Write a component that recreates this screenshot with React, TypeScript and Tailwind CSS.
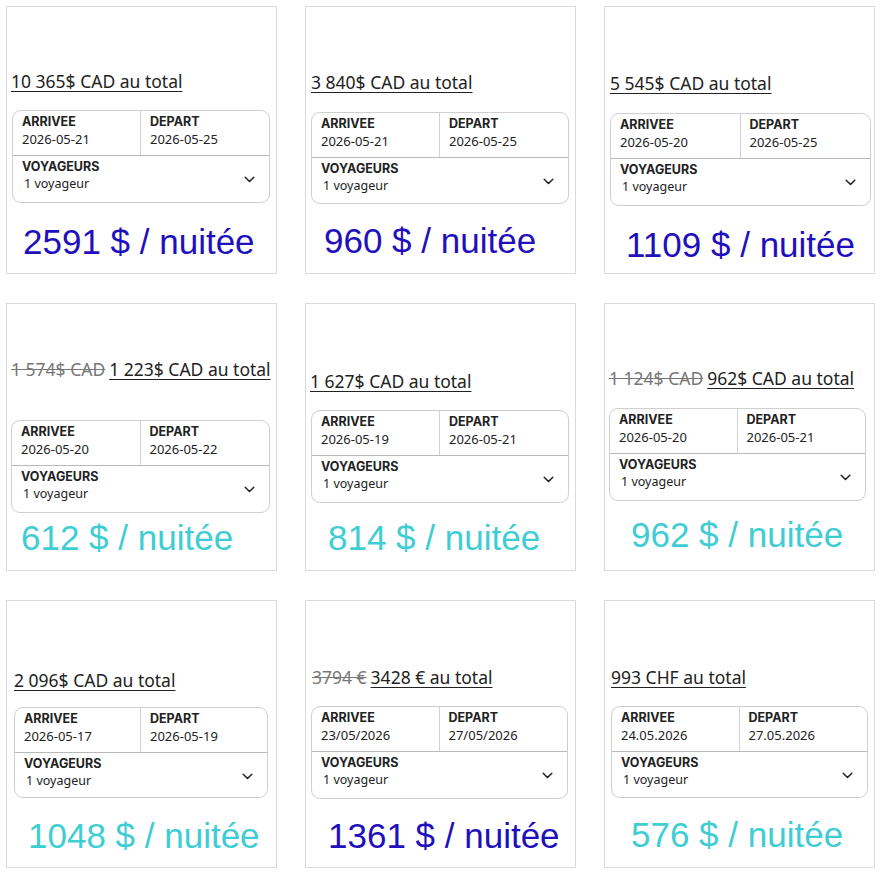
import React from 'react';

type Offer = {
  was?: string;
  total: string;
  arrive: string;
  depart: string;
  nightly: string;
  tone: 'blue' | 'cyan';
  // spacing inside each card, written out so Tailwind picks them up
  titleCls: string;
  boxCls: string;
  priceCls: string;
};

const offers: Offer[] = [
  { total: '10 365$ CAD au total', arrive: '2026-05-21', depart: '2026-05-25', nightly: '2591 $ / nuitée', tone: 'blue',
    titleCls: 'mt-[64px] ml-[4px]', boxCls: 'mt-[19px] ml-[5px] w-[258px] h-[93px]', priceCls: 'mt-[19px] ml-[16px]' },
  { total: '3 840$ CAD au total', arrive: '2026-05-21', depart: '2026-05-25', nightly: '960 $ / nuitée', tone: 'blue',
    titleCls: 'mt-[65px] ml-[5px]', boxCls: 'mt-[20px] ml-[5px] w-[258px] h-[92px]', priceCls: 'mt-[17px] ml-[18px]' },
  { total: '5 545$ CAD au total', arrive: '2026-05-20', depart: '2026-05-25', nightly: '1109 $ / nuitée', tone: 'blue',
    titleCls: 'mt-[66px] ml-[5px]', boxCls: 'mt-[20px] ml-[5px] w-[261px] h-[93px]', priceCls: 'mt-[19px] ml-[21px]' },
  { was: '1 574$ CAD', total: '1 223$ CAD au total', arrive: '2026-05-20', depart: '2026-05-22', nightly: '612 $ / nuitée', tone: 'cyan',
    titleCls: 'mt-[55px] ml-[4px]', boxCls: 'mt-[41px] ml-[4px] w-[259px] h-[93px]', priceCls: 'mt-[5px] ml-[14px]' },
  { total: '1 627$ CAD au total', arrive: '2026-05-19', depart: '2026-05-21', nightly: '814 $ / nuitée', tone: 'cyan',
    titleCls: 'mt-[67px] ml-[4px]', boxCls: 'mt-[19px] ml-[5px] w-[258px] h-[93px]', priceCls: 'mt-[15px] ml-[22px]' },
  { was: '1 124$ CAD', total: '962$ CAD au total', arrive: '2026-05-20', depart: '2026-05-21', nightly: '962 $ / nuitée', tone: 'cyan',
    titleCls: 'mt-[64px] ml-[4px]', boxCls: 'mt-[20px] ml-[4px] w-[257px] h-[93px]', priceCls: 'mt-[14px] ml-[26px]' },
  { total: '2 096$ CAD au total', arrive: '2026-05-17', depart: '2026-05-19', nightly: '1048 $ / nuitée', tone: 'cyan',
    titleCls: 'mt-[69px] ml-[7px]', boxCls: 'mt-[17px] ml-[7px] w-[254px] h-[91px]', priceCls: 'mt-[18px] ml-[21px]' },
  { was: '3794 €', total: '3428 € au total', arrive: '23/05/2026', depart: '27/05/2026', nightly: '1361 $ / nuitée', tone: 'blue',
    titleCls: 'mt-[66px] ml-[6px]', boxCls: 'mt-[19px] ml-[5px] w-[257px] h-[93px]', priceCls: 'mt-[17px] ml-[22px]' },
  { total: '993 CHF au total', arrive: '24.05.2026', depart: '27.05.2026', nightly: '576 $ / nuitée', tone: 'cyan',
    titleCls: 'mt-[66px] ml-[6px]', boxCls: 'mt-[19px] ml-[6px] w-[257px] h-[92px]', priceCls: 'mt-[17px] ml-[26px]' },
];

const Chevron = () => (
  <svg width="11" height="7" viewBox="0 0 11 7" fill="none" className="text-[#222]">
    <path d="M1.2 1.3 5.5 5.5l4.3-4.2" stroke="currentColor" strokeWidth="1.5" strokeLinecap="round" strokeLinejoin="round" />
  </svg>
);

// small caps-style heading over a value, used in every cell of the booking box
const Label = ({ children }: { children: React.ReactNode }) => (
  <span className="font-['Inter',sans-serif] text-[12.5px] font-bold uppercase leading-[16px] text-[#222]">{children}</span>
);

const Field = ({ label, value }: { label: string; value: string }) => (
  <div className="flex flex-col px-[9px] pt-[3px]">
    <Label>{label}</Label>
    <span className="text-[13px] leading-[18px] text-[#222]">{value}</span>
  </div>
);

const OfferCard = ({ o }: { o: Offer }) => (
  <div className="flex h-[268px] w-[271px] flex-col border border-[#dadada] bg-white">
    <div className={`${o.titleCls} h-[20px] whitespace-nowrap text-[17.5px] leading-[20px] text-[#222]`}>
      {o.was && <span className="mr-[4px] text-[#777] line-through">{o.was}</span>}
      <span className="underline underline-offset-[3px]">{o.total}</span>
    </div>

    <div className={`${o.boxCls} overflow-hidden rounded-[9px] border border-[#cfcfcf]`}>
      <div className="grid h-[45px] grid-cols-2 border-b border-[#b9b9b9]">
        <div className="border-r border-[#d2d2d2]">
          <Field label="Arrivee" value={o.arrive} />
        </div>
        <Field label="Depart" value={o.depart} />
      </div>
      <div className="flex h-[46px] items-center justify-between pr-[14px]">
        <div className="flex flex-col self-start px-[9px] pt-[3px]">
          <Label>Voyageurs</Label>
          <span className="pl-[2px] text-[12.5px] leading-[18px] text-[#222]">1 voyageur</span>
        </div>
        <Chevron />
      </div>
    </div>

    <div
      className={`${o.priceCls} h-[40px] whitespace-nowrap font-['Liberation_Sans',Arial,sans-serif] text-[35px] leading-[40px] ${
        o.tone === 'blue' ? 'text-[#1f10bd]' : 'text-[#3fcdd4]'
      }`}
    >
      {o.nightly}
    </div>
  </div>
);

export default function App() {
  return (
    <div className="min-h-screen bg-white font-['Noto_Sans',sans-serif]">
      <div className="grid grid-cols-[271px_271px_271px] gap-x-[28px] gap-y-[29px] pl-[6px] pt-[6px]">
        {offers.map((o, i) => (
          <OfferCard key={i} o={o} />
        ))}
      </div>
    </div>
  );
}
